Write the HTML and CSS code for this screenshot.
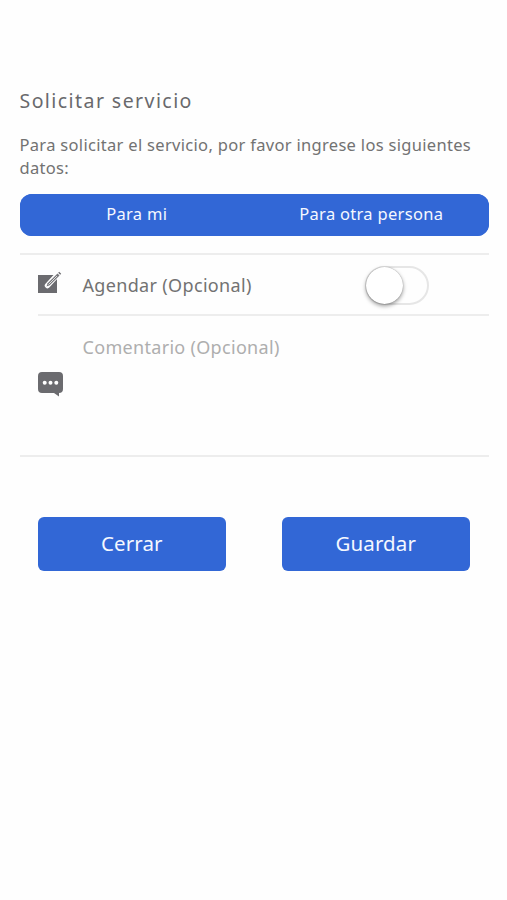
FILE: index.html
```html
<!DOCTYPE html>
<html lang="es">
<head>
    <meta charset="UTF-8">
    <meta name="viewport" content="width=device-width, initial-scale=1.0">
    <title>Solicitar servicio</title>
    <link rel="stylesheet" href="styles.css">
</head>
<body>
    <div class="container">
        <h1 class="title">Solicitar servicio</h1>
        <p class="intro">Para solicitar el servicio, por favor ingrese los siguientes datos:</p>

        <div class="segment">
            <button type="button" class="segment-button">Para mi</button>
            <button type="button" class="segment-button">Para otra persona</button>
        </div>

        <form class="form">
            <div class="row">
                <svg class="icon" viewBox="0 0 28 28">
                    <path d="M1 5h19v18H1z" fill="#6b6b6f"/>
                    <path d="M10.500 15.500L21.500 3.500" stroke="#fff" stroke-width="5.500" stroke-linecap="round"/>
                    <path d="M9.500 16.500l1.200-3.200L20.500 3.500l2 2L12.700 15.300z" fill="#77777b"/>
                    <path d="M21.200 2.800l1-1 2 2-1 1z" fill="#6b6b6f"/>
                    <path d="M11.500 14.500L20 6" stroke="#ddd" stroke-width="1"/>
                </svg>
                <label class="label" for="agendar">Agendar (Opcional)</label>
                <input type="checkbox" id="agendar" class="toggle">
            </div>
            <div class="row comment">
                <svg class="icon" viewBox="0 0 28 28">
                    <path d="M5 2h17a4 4 0 0 1 4 4v13a4 4 0 0 1-4 4v3.500L17 23H5a4 4 0 0 1-4-4V6a4 4 0 0 1 4-4z" fill="#6b6b6f"/>
                    <circle cx="7.700" cy="12.700" r="2" fill="#fff"/>
                    <circle cx="13.500" cy="12.700" r="2" fill="#fff"/>
                    <circle cx="19.300" cy="12.700" r="2" fill="#fff"/>
                </svg>
                <div class="placeholder">Comentario (Opcional)</div>
            </div>
        </form>

        <div class="actions">
            <button type="button" class="action">Cerrar</button>
            <button type="button" class="action">Guardar</button>
        </div>
    </div>
</body>
</html>
```

FILE: styles.css
```css
* {
    box-sizing: border-box;
}

body {
    background-color: #fefefe;
    color: #727272;
    font-family: "Noto Sans", sans-serif;
    margin: 0;
}

.container {
    padding: 86px 18.5px 0 19.5px;
}

.title {
    font-size: 19.5px;
    font-weight: 400;
    line-height: 30px;
    letter-spacing: 1.43px;
    margin: 0;
    color: #69696c;
}

.intro {
    font-size: 16.5px;
    line-height: 23px;
    letter-spacing: 0.31px;
    margin: 17px 0 15px;
}

button {
    background-color: #3267d6;
    border: none;
    color: #f5f8ff;
    font-family: inherit;
    padding: 0;
}

.segment {
    display: flex;
    height: 42px;
    background-color: #3267d6;
    border-radius: 12px;
    overflow: hidden;
}

.segment-button {
    flex: 1;
    font-size: 16.5px;
    letter-spacing: 0.3px;
    padding-bottom: 4px;
}

.form {
    margin-top: 17px;
    border-top: 2px solid #ededed;
    border-bottom: 2px solid #ededed;
}

.row {
    display: flex;
    align-items: center;
    height: 61px;
    margin-left: 18px;
    border-bottom: 2px solid #ededed;
}

.icon {
    width: 28px;
    height: 28px;
    fill: none;
    margin: 0 0 1px -1px;
}

.label {
    flex: 1;
    font-size: 18px;
    letter-spacing: 0.34px;
    margin-left: 18px;
}

.toggle {
    appearance: none;
    display: flex;
    width: 64px;
    height: 39px;
    margin: 1px 59.5px 0 0;
    border: 2px solid #e6e6e6;
    border-radius: 20px;
    background-color: #fefefe;
}

.toggle::before {
    content: "";
    width: 37px;
    height: 37px;
    margin: -1px;
    border-radius: 50%;
    background-color: #fff;
    box-shadow: 0 2px 4px rgba(0, 0, 0, 0.4), 0 0 1px rgba(0, 0, 0, 0.4);
}

.comment {
    height: 139px;
    border-bottom: none;
}

.comment .icon {
    margin-bottom: 4px;
}

.placeholder {
    align-self: flex-start;
    font-size: 18px;
    line-height: 26px;
    letter-spacing: 0.31px;
    margin: 18px 0 0 18px;
    color: #aeaeae;
}

.actions {
    display: flex;
    justify-content: space-between;
    margin: 60px 18.5px 0 18px;
}

.action {
    width: 188.5px;
    height: 54px;
    font-size: 20.5px;
    letter-spacing: 0.1px;
    border-radius: 6px;
    padding-bottom: 2px;
}
```
